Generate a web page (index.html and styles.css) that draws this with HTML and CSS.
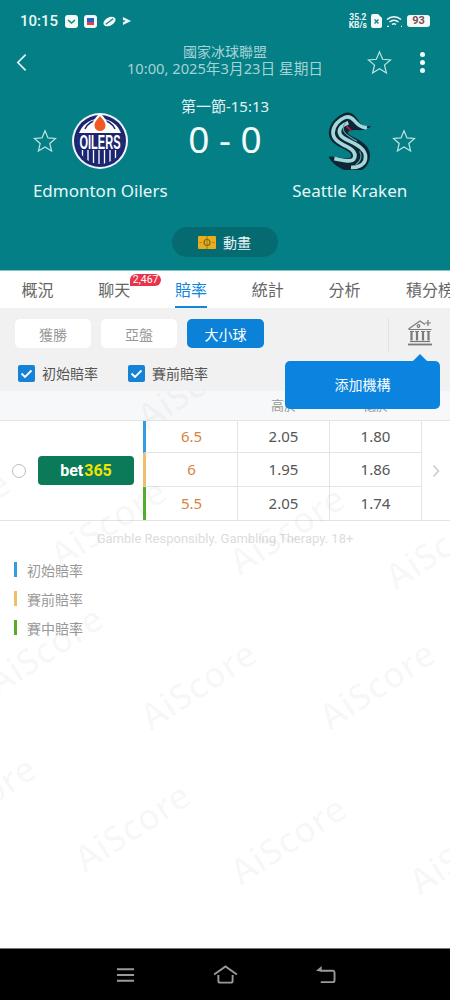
FILE: index.html
```html
<!DOCTYPE html>
<html lang="zh-Hant">
<head>
  <meta charset="UTF-8" />
  <title>Edmonton Oilers - Seattle Kraken</title>
  <meta name="viewport" content="width=device-width, initial-scale=1.0" />
  <link rel="stylesheet" href="styles.css">
</head>
<body>
  <div class="page">
    <header class="match-header">
      <div class="status-bar">
        <span class="clock">10:15</span>
        <svg class="status-app" viewBox="0 0 13 13"><rect width="13" height="13" rx="3" fill="#f4faf8"/><path d="M3 5l3.500 3L10 5" fill="none" stroke="#0b8a7c" stroke-width="1.600"/></svg>
        <svg class="status-app" viewBox="0 0 13 13"><rect width="13" height="13" rx="3" fill="#f4faf8"/><rect x="3" y="3" width="7" height="4" fill="#2a5fc0"/><rect x="3" y="7" width="7" height="3" fill="#d8434f"/></svg>
        <svg class="status-app" viewBox="0 0 14 13"><ellipse cx="7" cy="6.500" rx="7" ry="4.500" transform="rotate(-30 7 6.500)" fill="#f4faf8"/><path d="M3 9.500L11 3.500" stroke="#047f86" stroke-width="1.200"/></svg>
        <svg class="status-app status-play" viewBox="0 0 11 11"><path d="M1 1l9 4.500L1 10z" fill="#e9f6f5"/><path d="M1 4l3 1.500L1 7z" fill="#047f86"/></svg>
        <div class="status-right">
          <span class="net-speed">35.2<br>KB/s</span>
          <svg class="status-sim" viewBox="0 0 11 14"><path d="M0 2a2 2 0 0 1 2-2h5l4 4v8a2 2 0 0 1-2 2H2a2 2 0 0 1-2-2z" fill="#f4faf8"/><path d="M3.500 5.500l4 4m0-4l-4 4" stroke="#047f86" stroke-width="1.200"/></svg>
          <svg class="status-wifi" viewBox="0 0 17 12" fill="none" stroke="#f4faf8" stroke-width="1.500"><path d="M1 4.500c4-3.600 10-3.600 14 0"/><path d="M3.500 7c2.800-2.300 6.200-2.300 9 0"/><path d="M6 9.500c1.300-1 2.700-1 4 0"/><path d="M8 11.500h.1M1 11.500h2M15 11.500h1"/></svg>
          <span class="battery">93</span>
        </div>
      </div>

      <div class="top-bar">
        <svg class="back-icon" viewBox="0 0 12 20"><path d="M10.500 1.500L2 10l8.500 8.500" fill="none" stroke="#e8f6f6" stroke-width="1.800"/></svg>
        <div class="league">
          <div>國家冰球聯盟</div>
          <div class="league-date">10:00, 2025年3月23日 星期日</div>
        </div>
        <div class="top-actions">
          <svg class="star star-top" viewBox="0 0 24 24"><path d="M12 1.800l3 7.100 7.600.6-5.800 5 1.800 7.500L12 18l-6.600 4 1.800-7.500-5.800-5 7.600-.6z"/></svg>
          <div class="more-dots"><i></i><i></i><i></i></div>
        </div>
      </div>

      <div class="match">
        <div class="team team-home">
          <div class="team-top">
            <svg class="star star-home" viewBox="0 0 24 24"><path d="M12 1.800l3 7.100 7.600.6-5.800 5 1.800 7.500L12 18l-6.600 4 1.800-7.500-5.800-5 7.600-.6z"/></svg>
            <svg class="team-logo" viewBox="0 0 56 56">
              <defs><clipPath id="oil-clip"><circle cx="28" cy="28" r="23"/></clipPath></defs>
              <circle cx="28" cy="28" r="28" fill="#f2f4fa"/>
              <circle cx="28" cy="28" r="26" fill="#1c2570"/>
              <circle cx="28" cy="28" r="22.500" fill="#fff"/>
              <g clip-path="url(#oil-clip)">
                <rect x="0" y="20" width="56" height="36" fill="#1c2570"/>
                <path d="M10.500 37v14M16 37v17M21.500 37v18M27 37v18M32.500 37v18M38 37v17M43.500 37v14" stroke="#fff" stroke-width="1.300"/>
              </g>
              <path d="M13 16c3-6 9-9 15-9s12 3 15 9" fill="none" stroke="#1c2570" stroke-width="1.500"/>
              <path d="M28 0c3.500 4 7.500 7 7.500 12a7.500 7.500 0 0 1-15 0C20.500 7 24.500 4 28 0z" fill="#fff"/>
              <path d="M28 3c2.500 3 5.500 6 5.500 9.500a5.500 5.500 0 0 1-11 0C22.500 9 25.500 6 28 3z" fill="#ef5a24"/>
              <text class="oilers-word" x="28" y="35.500" textLength="41" lengthAdjust="spacingAndGlyphs">OILERS</text>
            </svg>
          </div>
          <div class="team-name">Edmonton Oilers</div>
        </div>

        <div class="match-center">
          <div class="period">第一節-15:13</div>
          <div class="score">0 - 0</div>
        </div>

        <div class="team team-away">
          <div class="team-top">
            <span></span>
            <svg class="team-logo" viewBox="9 12 168 174">
              <path d="M152 56C135 62 122 52 113 34 105 18 90 12 76 18 55 26 33 48 32 74c-1 24 20 36 46 48 17 8 26 18 18 28-10 10-36-2-64-2 13 22 48 44 76 42 27-2 44-25 42-52-2-26-30-40-54-52-12-6-16-14-6-20 15-8 40 6 62-10z" fill="#0e2536" stroke="#0e2536" stroke-width="5" stroke-linejoin="round"/>
              <path d="M144 58C128 62 116 50 106 38 98 28 88 24 78 28 62 34 42 52 42 74c0 20 20 31 42 42 20 10 30 24 20 38-10 10-36 2-58-2" fill="none" stroke="#a3d8da" stroke-width="11"/>
              <path d="M88 44C70 50 58 62 62 76c3 14 30 22 50 34 22 12 32 30 26 48-6 14-24 22-42 20" fill="none" stroke="#a3d8da" stroke-width="11"/>
              <path d="M80 44C72 52 70 64 76 72c6 10 22 18 38 28" fill="none" stroke="#5aa6ac" stroke-width="3.500"/>
              <path d="M122 130c8 14 4 30-12 40" fill="none" stroke="#5aa6ac" stroke-width="3.500"/>
              <path d="M84 52l14 14-4 3-13-12z" fill="#c8123a"/>
            </svg>
            <svg class="star star-away" viewBox="0 0 24 24"><path d="M12 1.800l3 7.100 7.600.6-5.800 5 1.800 7.500L12 18l-6.600 4 1.800-7.500-5.800-5 7.600-.6z"/></svg>
          </div>
          <div class="team-name">Seattle Kraken</div>
        </div>
      </div>

      <div class="anim-pill">
        <svg class="anim-icon" viewBox="0 0 18 13"><rect width="18" height="13" rx="1" fill="#e9ae1e"/><circle cx="9" cy="6.500" r="3" fill="none" stroke="#7d6a1a" stroke-width="1.200"/><path d="M9 0v13M1.500 6.500h2M14.500 6.500h2" stroke="#7d6a1a" stroke-width=".7"/></svg>
        <span>動畫</span>
      </div>
    </header>

    <nav class="tabs">
      <div class="tab"><span>概況</span></div>
      <div class="tab tab-chat"><span>聊天</span><b class="badge">2,467</b></div>
      <div class="tab active"><span>賠率</span></div>
      <div class="tab"><span>統計</span></div>
      <div class="tab"><span>分析</span></div>
      <div class="tab tab-last"><span>積分榜</span></div>
    </nav>

    <section class="filters">
      <div class="filter-top">
        <button class="chip">獲勝</button>
        <button class="chip">亞盤</button>
        <button class="chip selected">大小球</button>
        <div class="bank-box">
          <svg class="bank-icon" viewBox="0 0 26 27" fill="none" stroke="#7a7a7a" stroke-width="1.200">
            <path d="M1.500 10L13 2l5 3.500M1.500 10.500h23"/>
            <circle cx="11.500" cy="7" r="1.300"/>
            <path d="M21 1v6M18 4h6"/>
            <path d="M4.500 12.500v9M10 12.500v9M16 12.500v9M21.500 12.500v9" stroke-width="2.200"/>
            <path d="M3 12.500h4M8 12.500h4M14 12.500h4M19.500 12.500h4"/>
            <path d="M3 22.500h20"/>
            <path d="M1 25.500h24" stroke-width="1.800"/>
          </svg>
        </div>
      </div>
      <div class="filter-checks">
        <label class="check"><svg class="check-box" viewBox="0 0 17 17"><rect width="17" height="17" rx="2" fill="#1482d6"/><path d="M3.500 8.500l3.500 3.500 6.500-6.500" fill="none" stroke="#fff" stroke-width="1.800"/></svg>初始賠率</label>
        <label class="check"><svg class="check-box" viewBox="0 0 17 17"><rect width="17" height="17" rx="2" fill="#1482d6"/><path d="M3.500 8.500l3.500 3.500 6.500-6.500" fill="none" stroke="#fff" stroke-width="1.800"/></svg>賽前賠率</label>
      </div>
      <div class="add-popup">添加機構</div>
    </section>

    <section class="odds">
      <div class="odds-head">
        <span class="head-cell">高於</span>
        <span class="head-cell">低於</span>
      </div>
      <div class="odds-row">
        <div class="book">
          <span class="radio"></span>
          <span class="bet365">bet<em>365</em></span>
        </div>
        <div class="lines">
          <div class="line line-blue"><span class="cell cell-hcp">6.5</span><span class="cell">2.05</span><span class="cell">1.80</span></div>
          <div class="line line-orange"><span class="cell cell-hcp">6</span><span class="cell">1.95</span><span class="cell">1.86</span></div>
          <div class="line line-green"><span class="cell cell-hcp">5.5</span><span class="cell">2.05</span><span class="cell">1.74</span></div>
        </div>
        <div class="row-arrow">
          <svg viewBox="0 0 8 14"><path d="M1.500 1.500L6.500 7l-5 5.500" fill="none" stroke="#c9c9c9" stroke-width="1.500"/></svg>
        </div>
      </div>
      <p class="gamble">Gamble Responsibly. Gambling Therapy. 18+</p>
      <ul class="legend">
        <li class="legend-blue">初始賠率</li>
        <li class="legend-orange">賽前賠率</li>
        <li class="legend-green">賽中賠率</li>
      </ul>

      <div class="watermarks">
        <span class="mark m1">AiScore</span>
        <span class="mark m2">AiScore</span>
        <span class="mark m3">AiScore</span>
        <span class="mark m4">AiScore</span>
        <span class="mark m5">AiScore</span>
        <span class="mark m6">AiScore</span>
        <span class="mark m7">AiScore</span>
        <span class="mark m8">AiScore</span>
        <span class="mark m9">AiScore</span>
        <span class="mark m10">AiScore</span>
        <span class="mark m11">AiScore</span>
        <span class="mark m12">AiScore</span>
      </div>
    </section>

    <footer class="nav-bar">
      <svg viewBox="0 0 20 16" fill="none" stroke="#9a9a9a" stroke-width="2"><path d="M1 2h18M1 8h18M1 14h18"/></svg>
      <svg viewBox="0 0 26 20" fill="none" stroke="#9a9a9a" stroke-width="2"><path d="M1 10L13 1.500 25 10"/><path d="M5.500 10.500v6a2 2 0 0 0 2 2h11a2 2 0 0 0 2-2v-6"/></svg>
      <svg viewBox="0 0 22 20" fill="none" stroke="#9a9a9a" stroke-width="2"><path d="M6 6h13a2 2 0 0 1 1.500 2v8a2 2 0 0 1-2 2H6"/><path d="M7 1L1 6l6 1z" fill="#9a9a9a" stroke="none"/></svg>
    </footer>
  </div>
</body>
</html>
```

FILE: styles.css
```css
* {
  box-sizing: border-box;
}

body {
  margin: 0;
  padding: 0;
  background-color: #fff;
  font-family: "Noto Sans", "Noto Sans CJK TC", sans-serif;
  color: #444;
}

.page {
  width: 450px;
  height: 1000px;
  display: flex;
  flex-direction: column;
  overflow: hidden;
}

/* header */
.match-header {
  height: 271px;
  background-color: #047f86;
  color: #fff;
  border-bottom: 1px solid #7cc6cc;
}

.status-bar {
  height: 42px;
  padding: 0 20px;
  display: flex;
  align-items: center;
  gap: 6px;
}

.clock {
  font-family: Roboto, sans-serif;
  font-size: 15px;
  font-weight: 500;
  color: #eef8f7;
  margin-right: 1px;
}

.status-app {
  width: 13px;
  height: 13px;
}

.status-play {
  width: 10px;
  height: 10px;
}

.status-right {
  margin-left: auto;
  display: flex;
  align-items: center;
  gap: 4px;
}

.net-speed {
  font-family: Roboto, sans-serif;
  font-size: 8.5px;
  font-weight: 700;
  line-height: 8.5px;
  text-align: center;
  color: #eef8f7;
}

.status-sim {
  width: 11px;
  height: 14px;
}

.status-wifi {
  width: 17px;
  height: 12px;
}

.battery {
  width: 23px;
  height: 12px;
  border-radius: 3px;
  background-color: #f4faf8;
  color: #7a4a50;
  font-family: Roboto, sans-serif;
  font-size: 11px;
  font-weight: 700;
  line-height: 12px;
  text-align: center;
}

.top-bar {
  height: 40px;
  padding: 0 16px;
  display: grid;
  grid-template-columns: 1fr auto 1fr;
  align-items: center;
}

.back-icon {
  width: 11px;
  height: 19px;
}

.league {
  padding-bottom: 4px;
  text-align: center;
  font-size: 14px;
  line-height: 17px;
  color: #a4d3d6;
}

.league-date {
  font-size: 14.700px;
}

.top-actions {
  display: flex;
  align-items: center;
  justify-content: flex-end;
  padding-right: 9px;
}

.star {
  fill: none;
  stroke: #bfe4e4;
  stroke-width: 1.200;
}

.star-top {
  width: 25px;
  height: 25px;
  margin-right: 28px;
}

.more-dots {
  display: flex;
  flex-direction: column;
  gap: 3px;
  width: 5px;
}

.more-dots i {
  width: 5px;
  height: 5px;
  border-radius: 50%;
  background-color: #f2fafa;
}

.match {
  padding-top: 12px;
  display: grid;
  grid-template-columns: 1fr 73px 1fr;
}

.team {
  padding-top: 18px;
}

.team-home {
  padding-left: 12px;
}

.team-away {
  padding-right: 12px;
}

.team-top {
  display: grid;
  grid-template-columns: 1fr 56px 1fr;
  align-items: center;
}

.team-logo {
  width: 56px;
  height: 58px;
}

.star-home {
  width: 24px;
  height: 24px;
  justify-self: end;
  margin-right: 15px;
}

.star-away {
  width: 24px;
  height: 24px;
  margin-left: 14px;
}

.oilers-word {
  font-family: "Liberation Sans", sans-serif;
  font-size: 21px;
  font-weight: 700;
  fill: #fff;
  text-anchor: middle;
}

.team-name {
  margin-top: 10px;
  font-size: 17px;
  line-height: 22px;
  text-align: center;
  color: #e8f7f6;
  white-space: nowrap;
}

.match-center {
  text-align: center;
  white-space: nowrap;
}

.period {
  margin: 0 -20px;
  font-size: 15px;
  line-height: 24px;
  color: #e4f4f4;
}

.score {
  margin: 0 -5px;
  font-size: 37px;
  line-height: 42px;
  color: #f3fbfb;
}

.anim-pill {
  width: 106px;
  height: 30px;
  margin: 25px auto 0;
  padding-left: 26px;
  border-radius: 15px;
  background-color: #066a71;
  display: flex;
  align-items: center;
  gap: 7px;
  font-size: 14px;
  color: #e6f5f5;
}

.anim-icon {
  width: 18px;
  height: 13px;
}

/* tabs */
.tabs {
  height: 37px;
  display: flex;
  overflow: hidden;
  background-color: #fff;
}

.tab {
  flex: 0 0 76.800px;
  position: relative;
  left: -1px;
  text-align: center;
  font-size: 16px;
  color: #666;
}

.tab span {
  display: inline-block;
  height: 37px;
  line-height: 39px;
}

.tab.active {
  color: #1187d8;
}

.tab.active span {
  border-bottom: 2px solid #1187d8;
}

.tab-last {
  flex: none;
  padding-left: 23px;
  white-space: nowrap;
}

.badge {
  position: absolute;
  left: 54px;
  top: 3px;
  height: 12px;
  padding: 0 3px;
  border-radius: 6px 6px 6px 0;
  background-color: #e8344a;
  color: #fff;
  font-family: Roboto, sans-serif;
  font-size: 10.500px;
  font-weight: 400;
  line-height: 12px;
}

/* filters */
.filters {
  height: 83px;
  position: relative;
  z-index: 2;
  background-color: #f1f1f1;
  padding: 11px 0 0 15px;
}

.filter-top {
  display: flex;
  gap: 10px;
}

.chip {
  width: 76px;
  height: 29px;
  padding: 0;
  border: none;
  border-radius: 5px;
  background-color: #fff;
  color: #999;
  font-family: inherit;
  font-size: 14px;
}

.chip.selected {
  width: 77px;
  background-color: #0b82d8;
  color: #fff;
}

.bank-box {
  margin: -1px 0 -5px 114px;
  padding-left: 18px;
  border-left: 1px solid #e3e3e3;
}

.bank-icon {
  width: 26px;
  height: 27px;
  margin-top: 1px;
}

.filter-checks {
  margin: 17px 0 0 3px;
  display: flex;
  gap: 30px;
}

.check {
  display: flex;
  align-items: center;
  gap: 7px;
  font-size: 14px;
  line-height: 17px;
  color: #555;
}

.check-box {
  width: 17px;
  height: 17px;
}

.add-popup {
  position: absolute;
  left: 285px;
  top: 53px;
  width: 155px;
  height: 48px;
  border-radius: 5px;
  background-color: #0b84e0;
  color: #fff;
  font-size: 14px;
  line-height: 48px;
  text-align: center;
}

.add-popup::before {
  content: "";
  position: absolute;
  left: 128px;
  top: -7px;
  border-left: 7px solid transparent;
  border-right: 7px solid transparent;
  border-bottom: 7px solid #0b84e0;
}

/* odds table */
.odds {
  flex: 1;
  position: relative;
  overflow: hidden;
  background-color: #fff;
}

.odds-head {
  height: 30px;
  padding-left: 238px;
  display: flex;
  background-color: #f7f8fa;
  border-bottom: 1px solid #e4e4e4;
}

.head-cell {
  width: 92px;
  font-size: 13px;
  line-height: 29px;
  text-align: center;
  color: #999;
}

.odds-row {
  height: 100px;
  display: flex;
  border-bottom: 1px solid #e4e4e4;
}

.book {
  width: 143px;
  padding-left: 12px;
  display: flex;
  align-items: center;
  gap: 12px;
}

.radio {
  width: 14px;
  height: 14px;
  border: 1px solid #bbb;
  border-radius: 50%;
}

.bet365 {
  width: 96px;
  height: 29px;
  border-radius: 4px;
  background-color: #0b7a58;
  color: #fff;
  font-family: Roboto, sans-serif;
  font-size: 16px;
  font-weight: 700;
  line-height: 29px;
  text-align: center;
}

.bet365 em {
  margin-left: 1px;
  font-style: normal;
  color: #f2e205;
}

.lines {
  width: 279px;
}

.line {
  height: 34px;
  display: flex;
  border-left: 3px solid;
  border-bottom: 1px solid #e4e4e4;
}

.line:first-child {
  height: 32px;
}

.line:last-child {
  height: 33px;
  border-bottom: none;
}

.line-blue {
  border-left-color: #2f9fe0;
}

.line-orange {
  border-left-color: #f0bf6e;
}

.line-green {
  border-left-color: #56ad2c;
}

.cell {
  width: 92px;
  padding-bottom: 2px;
  display: flex;
  align-items: center;
  justify-content: center;
  border-right: 1px solid #e4e4e4;
  font-size: 15px;
  color: #555;
}

.cell-hcp {
  color: #d6843f;
}

.row-arrow {
  flex: 1;
  display: flex;
  align-items: center;
  justify-content: center;
}

.row-arrow svg {
  width: 8px;
  height: 14px;
}

.gamble {
  margin: 9px 0 0;
  font-family: Roboto, sans-serif;
  font-size: 13px;
  line-height: 18px;
  text-align: center;
  color: #dcdcdc;
}

.legend {
  list-style: none;
  margin: 7px 0 0;
  padding: 0 0 0 14px;
}

.legend li {
  height: 29px;
  display: flex;
  align-items: center;
  gap: 10px;
  font-size: 14px;
  color: #999;
}

.legend li::before {
  content: "";
  width: 3px;
  height: 15px;
}

.legend-blue::before {
  background-color: #2f9fe0;
}

.legend-orange::before {
  background-color: #f0bf6e;
}

.legend-green::before {
  background-color: #56ad2c;
}

/* watermark layer, lies over the table */
.watermarks {
  position: absolute;
  inset: 0;
  pointer-events: none;
}

.mark {
  position: absolute;
  width: 150px;
  font-size: 36px;
  font-weight: 600;
  line-height: 48px;
  text-align: center;
  color: rgba(0, 0, 0, 0.028);
  transform: rotate(-33deg);
}

.m1 { left: 120px; top: -30px; }
.m2 { left: 33px; top: 108px; }
.m3 { left: -123px; top: 100px; }
.m4 { left: 212px; top: 115px; }
.m5 { left: 368px; top: 130px; }
.m6 { left: -30px; top: 235px; }
.m7 { left: 123px; top: 270px; }
.m8 { left: 302px; top: 270px; }
.m9 { left: 57px; top: 412px; }
.m10 { left: 213px; top: 425px; }
.m11 { left: 392px; top: 435px; }
.m12 { left: -97px; top: 385px; }

/* system nav */
.nav-bar {
  height: 52px;
  background-color: #000;
  border-top: 1px solid #777;
  display: grid;
  grid-template-columns: 100px 100px 100px;
  justify-content: center;
  align-items: center;
  justify-items: center;
}

.nav-bar svg:nth-child(1) {
  width: 19px;
  height: 16px;
}

.nav-bar svg:nth-child(2) {
  width: 25px;
  height: 19px;
}

.nav-bar svg:nth-child(3) {
  width: 21px;
  height: 19px;
}
```
